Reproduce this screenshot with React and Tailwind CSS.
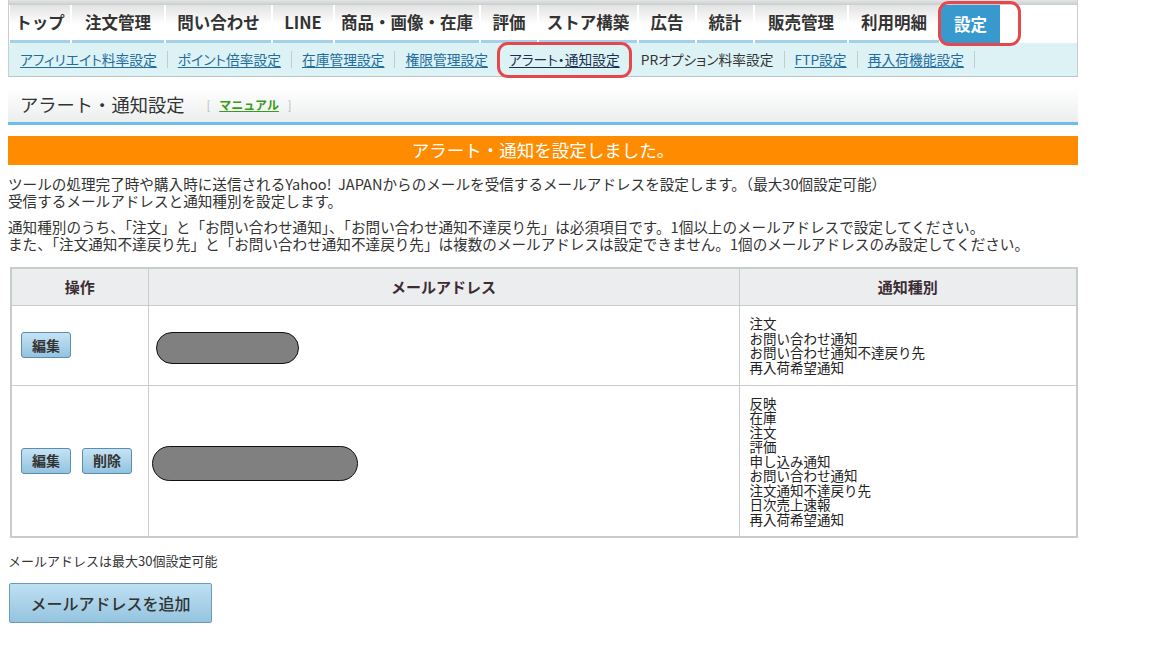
const tabs = [
  { label: "トップ", w: "w-[62px]" },
  { label: "注文管理", w: "w-[94px]" },
  { label: "問い合わせ", w: "w-[107px]" },
  { label: "LINE", w: "w-[62px]" },
  { label: "商品・画像・在庫", w: "w-[146px]" },
  { label: "評価", w: "w-[58px]" },
  { label: "ストア構築", w: "w-[100px]" },
  { label: "広告", w: "w-[58px]" },
  { label: "統計", w: "w-[58px]" },
  { label: "販売管理", w: "w-[94px]" },
  { label: "利用明細", w: "w-[92px]" },
];

const subLinks = [
  { label: "アフィリエイト料率設定" },
  { label: "ポイント倍率設定" },
  { label: "在庫管理設定" },
  { label: "権限管理設定" },
  { label: "アラート・通知設定", current: true },
  { label: "PRオプション料率設定", plain: true },
  { label: "FTP設定" },
  { label: "再入荷機能設定" },
];

const rows = [
  {
    buttons: ["編集"],
    pill: "ml-[7px] w-[143px] h-[32px]",
    kinds: ["注文", "お問い合わせ通知", "お問い合わせ通知不達戻り先", "再入荷希望通知"],
  },
  {
    buttons: ["編集", "削除"],
    pill: "ml-[3px] w-[206px] h-[35px]",
    kinds: [
      "反映",
      "在庫",
      "注文",
      "評価",
      "申し込み通知",
      "お問い合わせ通知",
      "注文通知不達戻り先",
      "日次売上速報",
      "再入荷希望通知",
    ],
  },
];

function SmallButton({ children }) {
  return (
    <button className="w-[50px] h-[26px] rounded-[3px] border border-[#5b8db1] bg-gradient-to-b from-[#c6e3f4] to-[#93c3df] text-[14px] font-bold text-[#333]">
      {children}
    </button>
  );
}

export default function App() {
  return (
    <div className="min-h-[652px] bg-white text-[#333] font-['Noto_Sans_CJK_JP','Noto_Sans',sans-serif]">
      <div className="ml-[8px] w-[1070px]">
        {/* global nav */}
        <div className="relative border-x border-[#c9cdcd]">
          <div className="h-[5px] bg-gradient-to-b from-[#e4e6e6] to-[#c9cdcd]" />
          <div className="flex h-[38px] pl-[1px]">
            {tabs.map((t) => (
              <div
                key={t.label}
                className={`${t.w} flex flex-col border-r-2 border-white bg-gradient-to-b from-[#e2e2e2] via-white to-white`}
              >
                <div className="flex flex-1 items-center justify-center text-[16.5px] font-bold leading-none text-[#333]">
                  {t.label}
                </div>
                <div className="h-[3px] bg-[#a6d0e8]" />
              </div>
            ))}
            <div className="flex w-[59px] items-center justify-center bg-[#3799cd] text-[16.5px] font-bold leading-none text-white">
              設定
            </div>
          </div>
          <div className="flex h-[34px] items-center border-b border-[#b9c5c7] bg-[#dcf2f5] pl-[1px] text-[13.75px] [font-feature-settings:'palt']">
            {subLinks.map((l) => (
              <div key={l.label} className="flex h-[17px] items-center border-r border-[#c2cccc] px-[10px]">
                {l.plain ? (
                  <span className="text-[#333]">{l.label}</span>
                ) : (
                  <a
                    href="#"
                    className={`underline underline-offset-2 ${l.current ? "text-[#1b2f4f]" : "text-[#1f6c9e]"}`}
                  >
                    {l.label}
                  </a>
                )}
              </div>
            ))}
          </div>
          {/* highlight rings */}
          <div className="pointer-events-none absolute left-[929px] top-[1px] h-[45px] w-[83px] rounded-[11px] border-[3px] border-[#e6474d]" />
          <div className="pointer-events-none absolute left-[488px] top-[42px] h-[36px] w-[135px] rounded-[11px] border-[3px] border-[#e6474d]" />
        </div>

        {/* title */}
        <div className="mt-[11px] flex h-[37px] items-center border-b-[3px] border-[#6fbde9] bg-gradient-to-b from-white to-[#eceeee] pl-[12px]">
          <h1 className="text-[18.3px] font-normal text-[#333]">アラート・通知設定</h1>
          <span className="ml-[22px] text-[12px] text-[#bbb]">
            [ <a href="#" className="mx-[6px] font-bold text-[#3a9a1a] underline">マニュアル</a> ]
          </span>
        </div>

        <div className="mt-[11px] flex h-[29px] items-center justify-center bg-[#ff8c00] text-[17.5px] text-white">
          アラート・通知を設定しました。
        </div>

        <div className="mt-[11px] text-[14.6px] leading-[16.5px] text-[#333]">
          <p>ツールの処理完了時や購入時に送信されるYahoo!&nbsp;&nbsp;JAPANからのメールを受信するメールアドレスを設定します。（最大30個設定可能）</p>
          <p>受信するメールアドレスと通知種別を設定します。</p>
          <p className="mt-[10px]">通知種別のうち、「注文」と「お問い合わせ通知」、「お問い合わせ通知不達戻り先」は必須項目です。1個以上のメールアドレスで設定してください。</p>
          <p>また、「注文通知不達戻り先」と「お問い合わせ通知不達戻り先」は複数のメールアドレスは設定できません。1個のメールアドレスのみ設定してください。</p>
        </div>

        <table className="ml-[2px] mt-[15px] w-[1068px] border-collapse border-2 border-[#c8cccc]">
          <thead>
            <tr className="h-[37px] bg-[#ecedef] text-[15px] font-bold text-[#3c2c34]">
              <th className="w-[137px] border border-[#c8cccc]">操作</th>
              <th className="w-[591px] border border-[#c8cccc]">メールアドレス</th>
              <th className="border border-[#c8cccc]">通知種別</th>
            </tr>
          </thead>
          <tbody>
            {rows.map((r, i) => (
              <tr key={i} className={i === 0 ? "h-[80px]" : ""}>
                <td className="border border-[#c8cccc] pl-[9px] align-middle">
                  <div className="flex gap-[11px]">
                    {r.buttons.map((b) => (
                      <SmallButton key={b}>{b}</SmallButton>
                    ))}
                  </div>
                </td>
                <td className="border border-[#c8cccc] align-middle">
                  <div className={`${r.pill} mt-[5px] rounded-full border-[1.5px] border-[#111] bg-[#808080]`} />
                </td>
                <td className="border border-[#c8cccc] px-[10px] py-[10px] align-middle text-[13.5px] leading-[14.5px] text-[#222]">
                  {r.kinds.map((k) => (
                    <div key={k}>{k}</div>
                  ))}
                </td>
              </tr>
            ))}
          </tbody>
        </table>

        <p className="mt-[13px] text-[13px] text-[#333]">メールアドレスは最大30個設定可能</p>

        <button className="ml-[1px] mt-[12px] h-[40px] w-[203px] rounded-[2px] border border-[#6b9bbb] bg-gradient-to-b from-[#bfe0f3] to-[#95c4df] text-[16px] font-medium text-[#333]">
          メールアドレスを追加
        </button>
      </div>
    </div>
  );
}
